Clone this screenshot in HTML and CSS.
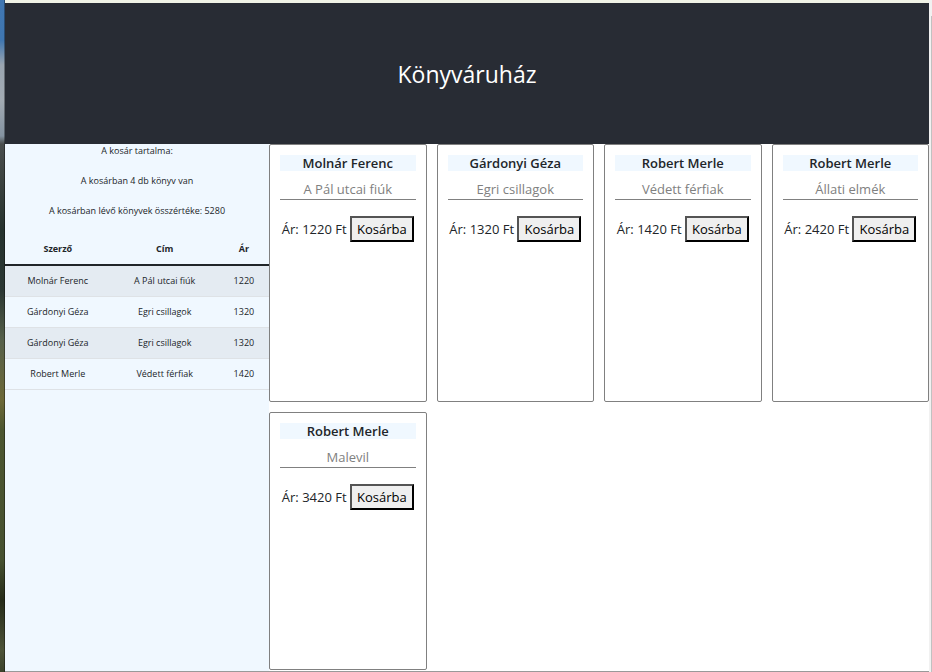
FILE: index.html
```html
<!DOCTYPE html>
<html lang="hu">
<head>
  <meta charset="utf-8">
  <meta name="viewport" content="width=device-width, initial-scale=1">
  <title>Könyváruház</title>
  <link rel="stylesheet" href="styles.css">
</head>
<body>
  <div class="desktop">
    <div class="app">
      <header class="header"><h1>Könyváruház</h1></header>
      <div class="content">
        <aside class="cart">
          <p>A kosár tartalma:</p>
          <p>A kosárban 4 db könyv van</p>
          <p>A kosárban lévő könyvek összértéke: 5280</p>
          <table class="cart-table">
            <thead>
              <tr><th scope="col">Szerző</th><th scope="col">Cím</th><th scope="col">Ár</th></tr>
            </thead>
            <tbody>
              <tr><td>Molnár Ferenc</td><td>A Pál utcai fiúk</td><td>1220</td></tr>
              <tr><td>Gárdonyi Géza</td><td>Egri csillagok</td><td>1320</td></tr>
              <tr><td>Gárdonyi Géza</td><td>Egri csillagok</td><td>1320</td></tr>
              <tr><td>Robert Merle</td><td>Védett férfiak</td><td>1420</td></tr>
            </tbody>
          </table>
        </aside>
        <main class="books">
          <article class="book">
            <h2>Molnár Ferenc</h2>
            <p class="title">A Pál utcai fiúk</p>
            <p class="price">Ár: 1220 Ft <button type="button">Kosárba</button></p>
          </article>
          <article class="book">
            <h2>Gárdonyi Géza</h2>
            <p class="title">Egri csillagok</p>
            <p class="price">Ár: 1320 Ft <button type="button">Kosárba</button></p>
          </article>
          <article class="book">
            <h2>Robert Merle</h2>
            <p class="title">Védett férfiak</p>
            <p class="price">Ár: 1420 Ft <button type="button">Kosárba</button></p>
          </article>
          <article class="book">
            <h2>Robert Merle</h2>
            <p class="title">Állati elmék</p>
            <p class="price">Ár: 2420 Ft <button type="button">Kosárba</button></p>
          </article>
          <article class="book">
            <h2>Robert Merle</h2>
            <p class="title">Malevil</p>
            <p class="price">Ár: 3420 Ft <button type="button">Kosárba</button></p>
          </article>
        </main>
      </div>
    </div>
    <div class="scroll-track"><div class="scroll-thumb"></div></div>
  </div>
</body>
</html>
```
FILE: styles.css
```css
* {
  box-sizing: border-box;
}

body {
  margin: 0;
  color: #212529;
  font-family: "Segoe UI", "Open Sans", "Noto Sans", sans-serif;
  font-size: 13px;
}

h1, h2, p {
  margin: 0;
}

/* Wallpaper strip visible to the left of the window */
.desktop {
  display: flex;
  min-height: 100vh;
  padding-left: 5px;
  background: linear-gradient(#4077b2 0, #3f76b0 40px, #9aa5b0 65px, #a3abb3 100px, #8493a1 136px, #4a4e4e 144px, #3c4340 180px, #26332f 230px, #2b3733 290px, #56604a 340px, #6d6938 400px, #4c5630 430px, #465130 560px, #262c1a 600px, #4d5338 650px, #3c432c 672px);
}

.app {
  display: flex;
  flex: 1;
  flex-direction: column;
  border-top: 3px solid #f0f3e6;
  border-bottom: 1px solid #999999;
  background: #ffffff;
  box-shadow: -1px 0 rgba(0, 0, 0, 0.35);
}

.header {
  padding: 53px 16px 52px;
  background: #282c34;
  color: #ffffff;
  text-align: center;
}

.header h1 {
  font-size: 23px;
  font-weight: 400;
  line-height: 36px;
}

.content {
  display: grid;
  flex: 1;
  grid-template-columns: 2fr 5fr;
}

.cart {
  background: #f0f8ff;
  font-size: 9px;
  line-height: 14px;
  text-align: center;
}

.cart p {
  margin-bottom: 16px;
}

.cart-table {
  width: 100%;
  border-collapse: separate;
  border-spacing: 0;
  table-layout: fixed;
}

.cart-table th,
.cart-table td {
  padding: 8px;
  border-bottom: 1px solid #dee2e6;
}

.cart-table th {
  width: 41%;
  border-bottom: 2px solid #212529;
}

.cart-table th:first-child {
  width: 40%;
}

.cart-table th:last-child {
  width: 19%;
}

.cart-table tbody tr:nth-child(odd) {
  background: #e4ebf2;
}

.books {
  display: grid;
  grid-template-columns: repeat(4, 1fr);
  grid-auto-rows: minmax(258px, auto);
  align-content: start;
  gap: 10px;
}

.book {
  padding: 10px;
  border: 1px solid #808080;
  border-radius: 2px;
  text-align: center;
}

.book h2 {
  margin-bottom: 8px;
  background: #f0f8ff;
  font-size: 13px;
  font-weight: 600;
  line-height: 16px;
}

.book .title {
  margin-bottom: 16px;
  border-bottom: 1px solid #808080;
  color: #808080;
  line-height: 20px;
}

.price {
  line-height: 26px;
  white-space: nowrap;
}

.price button {
  padding: 1px 5px;
  border: 2px outset #000000;
  border-radius: 0;
  background: #efefef;
  color: #000000;
  font: inherit;
  line-height: 20px;
}

.scroll-track {
  width: 3px;
  padding: 16px 0 0 2px;
  background: #f1f1f1;
}

.scroll-thumb {
  height: 100%;
  background: #c1c1c1;
}
```
